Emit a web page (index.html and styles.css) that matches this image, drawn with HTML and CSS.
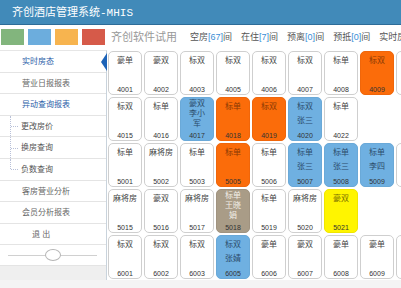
FILE: index.html
```html
<!DOCTYPE html>
<html lang="zh">
<head>
  <meta charset="UTF-8">
  <meta name="viewport" content="width=device-width, initial-scale=1.0">
  <title>齐创酒店管理系统-MHIS</title>
  <link rel="stylesheet" href="styles.css">
</head>
<body>

  <div class="app">
    <div class="header">齐创酒店管理系统-MHIS</div>

    <div class="topbar">
      <div class="swatches">
        <span class="swatch green"></span>
        <span class="swatch blue"></span>
        <span class="swatch orange"></span>
        <span class="swatch red"></span>
      </div>
      <div class="info">
        <span class="trial">齐创软件试用</span>
        <span class="stat">空房<b>[67]</b>间</span>
        <span class="stat">在住<b>[7]</b>间</span>
        <span class="stat">预离<b>[0]</b>间</span>
        <span class="stat">预抵<b>[0]</b>间</span>
        <span class="stat">实时房价</span>
      </div>
    </div>

    <div class="main">
      <!-- 左侧菜单 -->
      <div class="sidebar">
        <ul class="menu">
          <li class="item current">实时房态<span class="pointer"></span></li>
          <li class="item">营业日报报表</li>
          <li class="item open">异动查询报表</li>
          <li class="item sub">更改房价</li>
          <li class="item sub">换房查询</li>
          <li class="item sub last">负数查询</li>
          <li class="item">客房营业分析</li>
          <li class="item">会员分析报表</li>
          <li class="item logout">退&nbsp;出</li>
        </ul>
        <div class="slider"><span class="knob"></span></div>
        <div class="side-fill"></div>
      </div>

      <!-- 房态 -->
      <div class="rooms">
        <div class="floor">
          <div class="room"><span class="type">豪单</span><span class="num">4001</span></div>
          <div class="room"><span class="type">豪双</span><span class="num">4002</span></div>
          <div class="room"><span class="type">标双</span><span class="num">4003</span></div>
          <div class="room"><span class="type">标双</span><span class="num">4005</span></div>
          <div class="room"><span class="type">标双</span><span class="num">4006</span></div>
          <div class="room"><span class="type">标双</span><span class="num">4007</span></div>
          <div class="room"><span class="type">标单</span><span class="num">4008</span></div>
          <div class="room dirty"><span class="type">标双</span><span class="num">4009</span></div>
          <div class="room"></div>
        </div>
        <div class="floor">
          <div class="room"><span class="type">标双</span><span class="num">4015</span></div>
          <div class="room"><span class="type">标单</span><span class="num">4016</span></div>
          <div class="room busy tight"><span class="type">豪双</span><span class="guest">李小<br>军</span><span class="num">4017</span></div>
          <div class="room dirty"><span class="type">标单</span><span class="num">4018</span></div>
          <div class="room dirty"><span class="type">标双</span><span class="num">4019</span></div>
          <div class="room busy"><span class="type">标双</span><span class="guest">张三</span><span class="num">4020</span></div>
          <div class="room"><span class="type">标单</span><span class="num">4022</span></div>
        </div>
        <div class="floor">
          <div class="room"><span class="type">标单</span><span class="num">5001</span></div>
          <div class="room"><span class="type">麻将房</span><span class="num">5002</span></div>
          <div class="room"><span class="type">标单</span><span class="num">5003</span></div>
          <div class="room dirty"><span class="type">标单</span><span class="num">5005</span></div>
          <div class="room"><span class="type">标单</span><span class="num">5006</span></div>
          <div class="room busy"><span class="type">标单</span><span class="guest">张三</span><span class="num">5007</span></div>
          <div class="room busy"><span class="type">标单</span><span class="guest">张三</span><span class="num">5008</span></div>
          <div class="room busy"><span class="type">标单</span><span class="guest">李四</span><span class="num">5009</span></div>
          <div class="room"></div>
        </div>
        <div class="floor">
          <div class="room"><span class="type">麻将房</span><span class="num">5015</span></div>
          <div class="room"><span class="type">豪双</span><span class="num">5016</span></div>
          <div class="room"><span class="type">麻将房</span><span class="num">5017</span></div>
          <div class="room repair tight"><span class="type">标单</span><span class="guest">王晓<br>娟</span><span class="num">5018</span></div>
          <div class="room"><span class="type">标单</span><span class="num">5019</span></div>
          <div class="room"><span class="type">麻将房</span><span class="num">5020</span></div>
          <div class="room booked"><span class="type">豪双</span><span class="num">5021</span></div>
        </div>
        <div class="floor">
          <div class="room"><span class="type">标双</span><span class="num">6001</span></div>
          <div class="room"><span class="type">标双</span><span class="num">6002</span></div>
          <div class="room"><span class="type">标双</span><span class="num">6003</span></div>
          <div class="room busy"><span class="type">标双</span><span class="guest">张婧</span><span class="num">6005</span></div>
          <div class="room"><span class="type">豪单</span><span class="num">6006</span></div>
          <div class="room"><span class="type">豪双</span><span class="num">6007</span></div>
          <div class="room"><span class="type">豪单</span><span class="num">6008</span></div>
          <div class="room"><span class="type">豪单</span><span class="num">6009</span></div>
          <div class="room"></div>
        </div>
      </div>
    </div>
  </div>

</body>
</html>
```

FILE: styles.css
```css
/* 基本 */
body {
  margin: 0;
  padding: 0;
  background: #f4f4f4;
  font-family: "Liberation Sans", "Noto Sans CJK SC", sans-serif;
  color: #444;
}
.app {
  height: 280px;
  overflow: hidden;
  background: #fff;
  display: flex;
  flex-direction: column;
}
/* 顶部标题 */
.header {
  flex: none;
  height: 24px;
  line-height: 26px;
  padding-left: 12px;
  background: #418ab9;
  border-bottom: 1px solid #2d6c98;
  color: #fff;
  font-family: "Liberation Mono", "Noto Sans CJK SC", monospace;
  font-size: 11px;
}
.topbar {
  flex: none;
  height: 25px;
  display: flex;
}
.swatches {
  flex: none;
  width: 107px;
  display: flex;
  gap: 4px;
  padding: 4px 0 0 1px;
  box-sizing: border-box;
}
.swatch {
  width: 23px;
  height: 16px;
}
.swatch.green { background: #82b57d; }
.swatch.blue { background: #6caddd; }
.swatch.orange { background: #f7b44f; }
.swatch.red { background: #d65a49; }
.info {
  flex: 1;
  min-width: 0;
  display: flex;
  align-items: center;
  gap: 9px;
  padding: 0 0 3px 4px;
  white-space: nowrap;
  overflow: hidden;
  font-size: 9px;
  color: #555;
}
.info .trial {
  font-size: 11px;
  color: #999;
  margin-right: 4px;
}
.info b {
  font-weight: normal;
  color: #3b8ed6;
}
/* 主区域 */
.main {
  flex: 1;
  display: flex;
  min-height: 0;
}
.sidebar {
  flex: none;
  width: 107px;
  display: flex;
  flex-direction: column;
  border-right: 1px solid #c9d3dc;
  border-top: 1px solid #e6e6e6;
  box-sizing: border-box;
}
.menu {
  list-style: none;
  margin: 0;
  padding: 0;
}
.item {
  position: relative;
  height: 21.6px;
  line-height: 21px;
  padding-left: 22px;
  border-bottom: 1px solid #e4e4e4;
  box-sizing: border-box;
  font-size: 8px;
  color: #666;
}
.item.current,
.item.open {
  color: #2a5ea8;
}
.item.sub {
  padding-left: 21px;
  color: #555;
}
/* 树形虚线 */
.item.sub::before {
  content: "";
  position: absolute;
  left: 10px;
  top: 0;
  bottom: 0;
  border-left: 1px dotted #b8c0d8;
}
.item.sub.last::before {
  bottom: 50%;
}
.item.sub::after {
  content: "";
  position: absolute;
  left: 11px;
  top: 50%;
  width: 7px;
  border-top: 1px dotted #b8c0d8;
}
.item.logout {
  padding-left: 32px;
}
.pointer {
  position: absolute;
  right: -1px;
  top: 2px;
  width: 0;
  height: 0;
  border-top: 9px solid transparent;
  border-bottom: 9px solid transparent;
  border-right: 6px solid #1d63b8;
}
.slider {
  position: relative;
  height: 20px;
  border-bottom: 1px solid #e4e4e4;
}
.slider::before {
  content: "";
  position: absolute;
  left: 8px;
  right: 9px;
  top: 10px;
  border-top: 1px solid #d0d0d0;
}
.knob {
  position: absolute;
  left: 45px;
  top: 4px;
  width: 14px;
  height: 10px;
  border: 1px solid #b5b5b5;
  border-radius: 50%;
  background: #fff;
}
.side-fill {
  flex: 1;
  background: #efefef;
}
/* 房间 */
.rooms {
  flex: 1;
  min-width: 0;
  overflow: hidden;
  padding: 1px 0 0 1px;
  display: flex;
  flex-direction: column;
  gap: 2px;
}
.floor {
  display: flex;
  gap: 2px;
}
.room {
  flex: none;
  width: 34px;
  height: 44px;
  box-sizing: border-box;
  border: 1px solid #cfcfcf;
  border-radius: 5px;
  background: #fff;
  display: flex;
  flex-direction: column;
  align-items: center;
  padding-top: 3px;
  color: #444;
  text-align: center;
}
.room .type {
  font-size: 8px;
  line-height: 12px;
}
.room .guest {
  font-size: 8px;
  line-height: 12px;
  margin-top: 2px;
}
.room .num {
  margin-top: auto;
  font-size: 7px;
  line-height: 8px;
  color: #333;
}
.room.tight {
  padding-top: 1px;
}
.room.tight .type,
.room.tight .guest {
  line-height: 10px;
  margin-top: 0;
}
.room.busy {
  background: #6fb0e1;
  border-color: #6aa9d8;
  color: #2c4c6c;
}
.room.dirty {
  background: #fb6c0a;
  border-color: #f0660a;
  color: #8a3a05;
}
.room.repair {
  background: #a99c87;
  border-color: #a09380;
  color: #f2eee6;
}
.room.booked {
  background: #fff500;
  border-color: #f0e600;
  color: #7a6e00;
}
```
